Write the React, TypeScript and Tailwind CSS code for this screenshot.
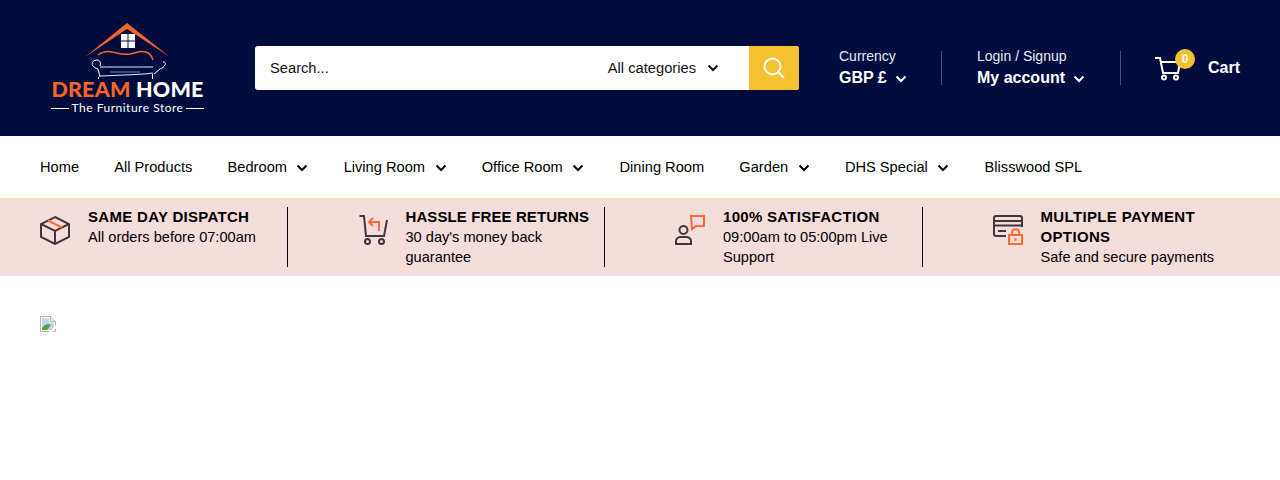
const sans = "font-['Liberation_Sans',Arial,sans-serif]";

function Chevron({ className }: { className?: string }) {
  return (
    <svg width="12" height="8" viewBox="0 0 12 8" fill="none" className={className}>
      <path d="M1.5 1.5 6 6l4.5-4.5" stroke="currentColor" strokeWidth="2" />
    </svg>
  );
}

function Logo() {
  return (
    <div className="flex w-[175px] flex-col items-center">
      <svg width="175" height="58" viewBox="0 0 175 58" fill="none">
        {/* roof */}
        <path d="M45 35 87 1l43 34-43-28z" fill="#f4652a" />
        {/* window */}
        <path d="M81 12h6.500v6.500H81zM88.500 12H95v6.500h-6.500zM81 19.500h6.500V26H81zM88.500 19.500H95V26h-6.500z" fill="#fff" />
        {/* sofa back */}
        <path d="M58 33c4-3 10-4 14-3 6 1 10 3 18 2 6-1 10-4 16-2 4 1 6 5 7 8" stroke="#f4652a" strokeWidth="1.500" />
        {/* sofa */}
        <path d="M57 38c-3 0-5 2-5 4s3 4 6 5l2 8M57 38c3 0 4 3 3 6M123 40c2 0 3 1 2 3s-3 3-5 4l-6 5" stroke="#fff" strokeWidth="1" />
        <path d="M60 45h53" stroke="#e4e6f2" strokeWidth="1" />
        <path d="M60 54c20-1 40-1 53-3" stroke="#e4e6f2" strokeWidth="1.200" />
        <path d="M70 50h30" stroke="#7d84aa" strokeWidth="1" />
        <path d="M58.500 55v2M112.500 52v5" stroke="#fff" strokeWidth="1" />
      </svg>
      <div className="mt-[-1px] text-[21.500px] leading-[20px] font-black tracking-[0.2px] whitespace-nowrap font-['Lato',sans-serif]">
        <span className="text-[#f4652a]">DREAM</span> <span className="text-white">HOME</span>
      </div>
      <div className="mt-[3px] flex items-center gap-[3px] text-white">
        <span className="h-px w-[18px] bg-white" />
        <span className="text-[12px] leading-[12px] tracking-[0.5px] whitespace-nowrap font-['Lato',sans-serif]">The Furniture Store</span>
        <span className="h-px w-[18px] bg-white" />
      </div>
    </div>
  );
}

function BoxIcon() {
  return (
    <svg width="30" height="30" viewBox="0 0 30 30" fill="none" strokeWidth="2">
      <path d="M15 2 29 9v13l-14 7-14-7V9zM1 9l14 7 14-7M15 16v13" stroke="#43363b" />
      <path d="M8 5.500 22 12.500" stroke="#ff6b35" />
    </svg>
  );
}

function ReturnIcon() {
  return (
    <svg width="30" height="30" viewBox="0 0 30 30" fill="none" strokeWidth="2">
      <path d="M1.500 1H6l2 20h18l3-16" stroke="#43363b" />
      <circle cx="9.500" cy="26.500" r="2.500" stroke="#43363b" />
      <circle cx="23.500" cy="26.500" r="2.500" stroke="#43363b" />
      <path d="M15 3 11 7l4 4M11 7h10v9" stroke="#ff6b35" />
    </svg>
  );
}

function SupportIcon() {
  return (
    <svg width="30" height="30" viewBox="0 0 30 30" fill="none" strokeWidth="2">
      <circle cx="8.500" cy="15" r="4" stroke="#43363b" />
      <path d="M1 29v-3c0-2 2-4 4-4h7c2 0 4 2 4 4v3z" stroke="#43363b" />
      <path d="M16 1h13v10h-8l-4 3z" stroke="#ff6b35" />
    </svg>
  );
}

function PaymentIcon() {
  return (
    <svg width="30" height="30" viewBox="0 0 30 30" fill="none" strokeWidth="2">
      <path d="M13 21H3c-1 0-2-1-2-2V3c0-1 1-2 2-2h24c1 0 2 1 2 2v9M1 6h28M1 10.500h28M5 16h8" stroke="#43363b" />
      <path d="M16 20h13v9H16zM19 20v-2.500c0-4.500 7-4.500 7 0V20M22.500 23v3" stroke="#ff6b35" />
    </svg>
  );
}

function BrokenImage() {
  return (
    <svg width="16" height="16" viewBox="0 0 16 16" className="block">
      <path d="M.5.500h10l5 5v10H.5z" fill="#fff" stroke="#b4b4b4" />
      <path d="M10.500.5v5h5" fill="#e6e6e6" stroke="#b4b4b4" />
      <path d="M2 2h7.500v4.500H14V14H2z" fill="#c3d5f2" />
      <path d="M2 14v-2c3-4 6-5 9-3l-4 5z" fill="#4fa53a" />
      <path d="M9 16 16 9v3l-4 4z" fill="#fff" />
    </svg>
  );
}

const navItems = [
  { label: "Home" },
  { label: "All Products" },
  { label: "Bedroom", more: true },
  { label: "Living Room", more: true },
  { label: "Office Room", more: true },
  { label: "Dining Room" },
  { label: "Garden", more: true },
  { label: "DHS Special", more: true },
  { label: "Blisswood SPL" },
];

const perks = [
  { icon: <BoxIcon />, title: "SAME DAY DISPATCH", text: "All orders before 07:00am", track: "tracking-[0.3px]" },
  { icon: <ReturnIcon />, title: "HASSLE FREE RETURNS", text: "30 day's money back guarantee", track: "tracking-[0.1px]" },
  { icon: <SupportIcon />, title: "100% SATISFACTION", text: "09:00am to 05:00pm Live Support", track: "tracking-[0.3px]" },
  { icon: <PaymentIcon />, title: "MULTIPLE PAYMENT OPTIONS", text: "Safe and secure payments", track: "tracking-[0.35px]" },
];

export default function App() {
  return (
    <div className={`min-h-[480px] bg-white text-black ${sans}`}>
      {/* Header */}
      <header className="flex h-[136px] items-center bg-[#000c3d] px-10 text-white">
        <Logo />
        <div className="ml-10 flex h-[44px] w-[544px] items-center overflow-hidden rounded-[3px] bg-white text-[14.700px] text-[#111]">
          <span className="flex-1 pl-[15px]">Search...</span>
          <span className="mr-[30px] flex items-center gap-[11px]">
            All categories
            <Chevron />
          </span>
          <span className="flex h-full w-[50px] items-center justify-center bg-[#f6c033]">
            <svg width="22" height="22" viewBox="0 0 22 22" fill="none" stroke="#fff" strokeWidth="2">
              <circle cx="9.500" cy="9.500" r="8" />
              <path d="m15.500 15.500 5.500 5.500" />
            </svg>
          </span>
        </div>
        <div className="ml-10 w-[102px]">
          <div className="mt-[-1px] text-[14px] leading-[20px] text-[#e8eaf5]">Currency</div>
          <div className="mt-[1px] flex items-center gap-[8px] text-[16px] leading-[22px] font-bold">
            GBP £
            <Chevron className="mt-[2px]" />
          </div>
        </div>
        <div className="h-[34px] w-px bg-[#4a5278]" />
        <div className="ml-[35px] w-[143px]">
          <div className="mt-[-1px] text-[14px] leading-[20px] text-[#e8eaf5]">Login / Signup</div>
          <div className="mt-[1px] flex items-center gap-[8px] text-[16px] leading-[22px] font-bold">
            My account
            <Chevron className="mt-[2px]" />
          </div>
        </div>
        <div className="h-[34px] w-px bg-[#4a5278]" />
        <div className="relative ml-[33px] flex items-center">
          <svg width="27" height="25" viewBox="0 0 27 25" fill="none" stroke="#fff" strokeWidth="2">
            <path d="M1 2h5l3 15h15l2-11H7" />
            <circle cx="10" cy="21.500" r="2" />
            <circle cx="22" cy="21.500" r="2" />
          </svg>
          <span className="absolute top-[-7px] left-[21px] flex h-5 w-5 items-center justify-center rounded-full bg-[#f6c033] text-[12px] font-bold">
            0
          </span>
          <span className="ml-[27px] text-[16px] font-bold">Cart</span>
        </div>
      </header>

      {/* Nav */}
      <nav className="flex h-[62px] items-center gap-[35.200px] px-10 pt-[2px] text-[14.650px]">
        {navItems.map((item) => (
          <span key={item.label} className="flex items-center gap-[9.500px]">
            {item.label}
            {item.more && <Chevron className="mt-[1px]" />}
          </span>
        ))}
      </nav>

      {/* Perks */}
      <section className="border-t border-b border-t-[#f9e3a0] border-b-[#e5e5e5] bg-[#f5dddc]">
        <div className="grid grid-cols-4 gap-[70px] px-10 py-2">
          {perks.map((perk, i) => (
            <div
              key={perk.title}
              className={`flex h-[60px] items-start gap-[18px] pr-[14px] ${i < 3 ? "border-r border-black" : ""}`}
            >
              <div className="mt-[8px] shrink-0">{perk.icon}</div>
              <div className="text-[14.600px] leading-[20px]">
                <div className={`text-[15px] font-bold ${perk.track}`}>{perk.title}</div>
                <div>{perk.text}</div>
              </div>
            </div>
          ))}
        </div>
      </section>

      <div className="px-10 pt-10">
        <BrokenImage />
      </div>
    </div>
  );
}
